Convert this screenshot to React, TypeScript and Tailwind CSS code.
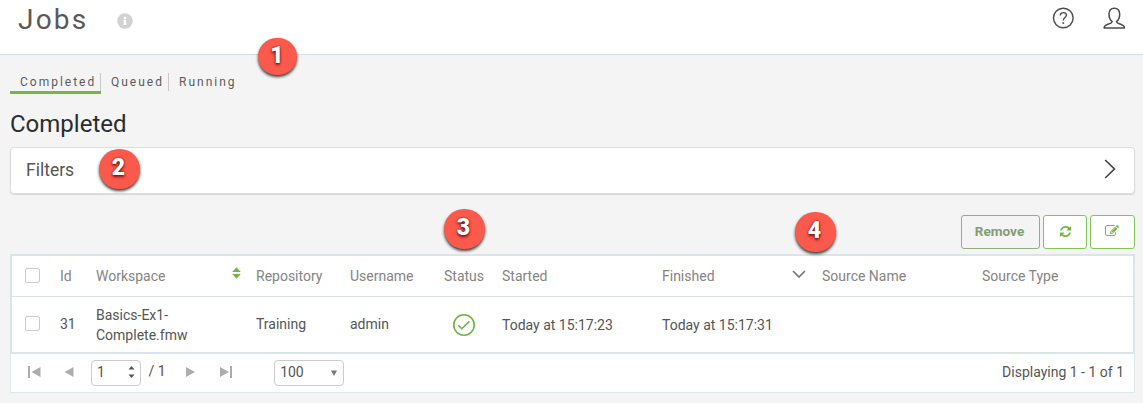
import type { ReactNode } from 'react';
import { FaInfoCircle } from 'react-icons/fa';

function Marker({ n, className }: { n: number; className: string }) {
  return (
    <div
      className={`absolute flex items-center justify-center rounded-full bg-[#fb594b] pb-px pr-px text-[23px] font-black text-white shadow-[0_2px_3px_rgba(0,0,0,0.75)] [text-shadow:0_2px_3px_rgba(90,0,0,0.75),0_0_2px_rgba(60,0,0,0.8)] ${className}`}
    >
      {n}
    </div>
  );
}

function Checkbox() {
  return <span className="-mt-px block h-[15px] w-[15px] rounded-[2px] border border-[#ccc] bg-white" />;
}

function Cell({ children, className = '' }: { children?: ReactNode; className?: string }) {
  return <div className={`shrink-0 ${className}`}>{children}</div>;
}

function HelpIcon() {
  return (
    <svg width="22" height="22" viewBox="0 0 22 22" fill="none" stroke="#4d4d4d" strokeWidth="1.4">
      <circle cx="11.3" cy="11" r="9.8" />
      <path d="M8.300 8.500c0-1.800 1.300-2.900 3.100-2.900s3 1.100 3 2.700c0 2.200-3.100 2.400-3.100 5.300" />
      <path d="M11.300 15.200v1.700" strokeWidth="1.700" />
    </svg>
  );
}

function UserIcon() {
  return (
    <svg width="23" height="23" viewBox="0 0 23 23" fill="none" stroke="#4d4d4d" strokeWidth="1.500" strokeLinejoin="round">
      <path d="M9.200 14.600C7.200 13 6 10.500 6 7.200 6 3.400 8 1.200 11.300 1.200s5.400 2.200 5.400 6c0 3.300-1.200 5.800-3.200 7.400.3 1.300 1.500 1.800 3.400 2.400 2.800.9 4.600 1.400 4.600 4.100H1.100c0-2.700 1.800-3.200 4.600-4.100 1.900-.6 3.200-1.100 3.500-2.400z" />
    </svg>
  );
}

export default function App() {
  return (
    <div className="relative h-[403px] w-[1143px] overflow-hidden bg-[#f4f4f4] font-[Roboto,sans-serif] text-[14px] text-[#555]">
      <header className="flex h-[55px] items-start justify-between border-b border-[#d3dee2] bg-white pl-[18px] pr-[17px]">
        <div className="flex items-center">
          <h1 className="w-[99px] text-[28px] leading-[40px] tracking-[2.200px] text-[#5c5858]">Jobs</h1>
          <FaInfoCircle className="mt-[2px] h-4 w-4 text-[#d2d2d2]" />
        </div>
        <div className="flex gap-[29px] pt-[7px]">
          <HelpIcon />
          <UserIcon />
        </div>
      </header>

      <nav className="flex h-[39px] items-end pl-[10px] text-[12px] leading-[18px] tracking-[2px] text-[#5b5b5b]">
        <div className="h-[21px] w-[91px] border-b-[3px] border-[#74b843]">
          <div className="h-[18px] border-r border-[#c9c9c9] pl-[10px]">Completed</div>
        </div>
        <div className="mb-[3px] h-[18px] w-[68px] border-r border-[#c9c9c9] pl-[10px]">Queued</div>
        <div className="mb-[3px] h-[18px] pl-[10px]">Running</div>
      </nav>

      <main className="pl-[10px] pr-[8px]">
        <h2 className="h-[53px] pt-[15px] text-[24px] leading-[30px] text-[#2c2c2c]">Completed</h2>

        <section className="flex h-[47px] items-center justify-between rounded-[4px] border border-[#ddd] bg-white pl-[15px] pr-[18px] text-[17.500px] shadow-[0_1px_1px_rgba(0,0,0,0.12)]">
          <span>Filters</span>
          <svg className="mb-[3px]" width="12" height="20" viewBox="0 0 12 20" fill="none" stroke="#444" strokeWidth="1.700">
            <path d="M1.200 1l9.200 9-9.200 9" />
          </svg>
        </section>

        <div className="mt-[21px] flex h-[34px] justify-end gap-[3px]">
          <button className="w-[79px] rounded-[3px] border border-[#92ad81] pb-px pr-[2px] text-[13.600px] font-bold text-[#829d70]">Remove</button>
          <button className="flex w-[44px] items-center justify-center rounded-[3px] border border-[#83c45a] bg-white pb-px">
            <svg width="13" height="13" viewBox="0 0 1792 1792" fill="#74b843">
              <path d="M1639 1056q0 5-1 7-64 268-268 434.500t-478 166.500q-146 0-282.500-55t-243.500-157l-129 129q-19 19-45 19t-45-19-19-45v-448q0-26 19-45t45-19h448q26 0 45 19t19 45-19 45l-137 137q71 66 161 102t187 36q134 0 250-65t186-179q11-17 53-117 8-23 30-23h192q13 0 22.500 9.500t9.500 22.500zm25-800v448q0 26-19 45t-45 19h-448q-26 0-45-19t-19-45 19-45l138-138q-148-137-349-137-134 0-250 65t-186 179q-11 17-53 117-8 23-30 23h-199q-13 0-22.500-9.500t-9.500-22.500v-7q65-268 270-434.500t480-166.500q146 0 284 55.500t245 156.500l130-129q19-19 45-19t45 19 19 45z" />
            </svg>
          </button>
          <button className="flex w-[45px] items-center justify-center rounded-[3px] border border-[#83c45a] bg-white pb-[2px] pr-px">
            <svg width="14" height="14" viewBox="0 0 1792 1792" fill="#74b843">
              <path d="M888 1184l116-116-152-152-116 116v56h96v96h56zm440-720q-16-16-33 1l-350 350q-17 17-1 33t33-1l350-350q17-17 1-33zm80 594v190q0 119-84.500 203.500t-203.500 84.500h-832q-119 0-203.500-84.500t-84.500-203.500v-832q0-119 84.500-203.500t203.500-84.500h832q63 0 117 25 15 7 18 23 3 17-9 29l-49 49q-14 14-32 8-23-6-45-6h-832q-66 0-113 47t-47 113v832q0 66 47 113t113 47h832q66 0 113-47t47-113v-126q0-13 9-22l64-64q15-15 35-7t20 29zm-96-738l288 288-672 672h-288v-288zm444 132l-92 92-288-288 92-92q28-28 68-28t68 28l152 152q28 28 28 68t-28 68z" />
            </svg>
          </button>
        </div>

        <section className="mt-[5px] border border-[#dfe8ea] bg-white">
          <div className="-m-px border-2 border-[#dae5e8]">
            <div className="flex h-[41px] items-center border-b border-[#d9dede] pl-[13px] text-[#848484]">
              <Cell className="w-[35px]"><Checkbox /></Cell>
              <Cell className="w-[36px]">Id</Cell>
              <Cell className="flex w-[160px] items-center justify-between pr-[15px]">
                Workspace
                <svg className="mb-[7px]" width="9" height="12" viewBox="0 0 9 12" fill="#74b843">
                  <path d="M4.500 .3L8.800 5H.2zM4.500 11.700L8.800 7H.2z" />
                </svg>
              </Cell>
              <Cell className="w-[94px]">Repository</Cell>
              <Cell className="w-[94px]">Username</Cell>
              <Cell className="w-[58px]">Status</Cell>
              <Cell className="w-[160px]">Started</Cell>
              <Cell className="flex w-[160px] items-center justify-between pr-[16px]">
                Finished
                <svg className="mb-[4px]" width="14" height="8" viewBox="0 0 14 8" fill="none" stroke="#777" strokeWidth="1.700">
                  <path d="M1 1l6 6 6-6" />
                </svg>
              </Cell>
              <Cell className="w-[160px]">Source Name</Cell>
              <Cell>Source Type</Cell>
            </div>
            <div className="flex h-[55px] items-center pb-[2px] pl-[13px] leading-[20px]">
              <Cell className="w-[35px]"><Checkbox /></Cell>
              <Cell className="w-[36px]">31</Cell>
              <Cell className="w-[160px] pt-[2px]">Basics-Ex1-<br />Complete.fmw</Cell>
              <Cell className="w-[94px]">Training</Cell>
              <Cell className="w-[94px]">admin</Cell>
              <Cell className="w-[58px] pl-[9px] pt-[2px]">
                <svg width="22" height="22" viewBox="0 0 22 22" fill="none" stroke="#6cb33f" strokeWidth="1.600">
                  <circle cx="11" cy="11" r="10.200" />
                  <path d="M5.200 11.200l3.600 3.500 7.500-7.300" />
                </svg>
              </Cell>
              <Cell className="w-[160px] pt-[2px]">Today at 15:17:23</Cell>
              <Cell className="pt-[2px]">Today at 15:17:31</Cell>
            </div>
          </div>
          <footer className="flex h-[39px] items-center justify-between pl-[17px] pr-[10px]">
            <div className="flex items-center">
              <svg className="mb-[2px] w-[52px]" width="52" height="12" viewBox="0 0 52 12" fill="#adadad">
                <path d="M0 0h2v12H0zM12.500 1v10L3.500 6zM45.500 1v10L36.500 6z" />
              </svg>
              <div className="ml-[11px] flex h-[26px] w-[50px] items-center justify-between rounded-[4px] border border-[#ccc] pl-[5px] pr-[5px]">
                1
                <svg className="mb-px" width="7" height="12" viewBox="0 0 7 12" fill="#555">
                  <path d="M3.500 0L6.500 3.500h-6zM3.500 12l3-3.500h-6z" />
                </svg>
              </div>
              <span className="ml-[7.500px] pb-[2px]">/ 1</span>
              <svg className="mb-[2px] ml-[20.500px]" width="48" height="12" viewBox="0 0 48 12" fill="#adadad">
                <path d="M0 1v10l9-5zM34 1v10l9-5zM44 0h2v12h-2z" />
              </svg>
              <div className="ml-[40px] flex h-[26px] w-[70px] items-center justify-between rounded-[4px] border border-[#ccc] pl-[5px] pr-[6px]">
                100
                <svg className="mt-px" width="6" height="6" viewBox="0 0 6 6" fill="#777">
                  <path d="M0 .5h6L3 6z" />
                </svg>
              </div>
            </div>
            <span>Displaying 1 - 1 of 1</span>
          </footer>
        </section>
      </main>

      <Marker n={1} className="left-[258px] top-[38px] h-[37px] w-[39px]" />
      <Marker n={2} className="left-[98.500px] top-[149px] h-[40px] w-[41px]" />
      <Marker n={3} className="left-[443.500px] top-[209px] h-[40px] w-[41px]" />
      <Marker n={4} className="left-[794.500px] top-[212px] h-[40px] w-[41px]" />
    </div>
  );
}
